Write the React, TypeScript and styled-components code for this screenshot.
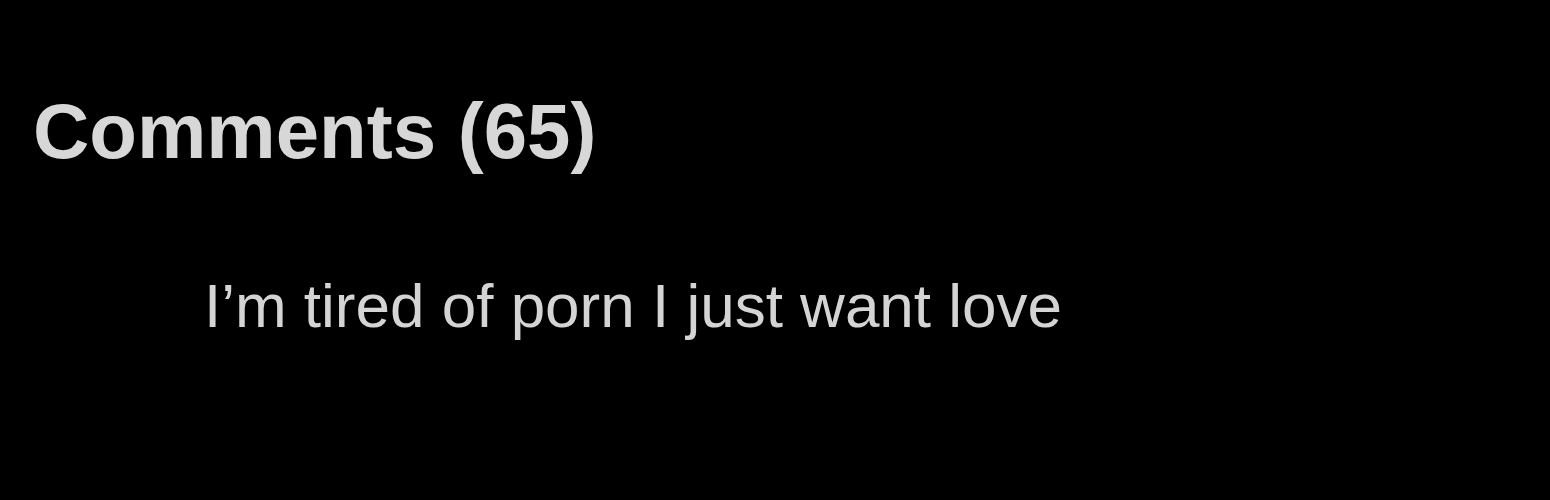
import styled, { createGlobalStyle } from 'styled-components';

const GlobalStyle = createGlobalStyle({
    'html, body': {
        margin: 0,
        padding: 0,
        background: '#000'
    },
    body: {
        fontFamily: '"Liberation Sans", Arial, sans-serif'
    }
});

const Page = styled.div({
    width: '1550px',
    height: '500px',
    boxSizing: 'border-box',
    background: '#000',
    padding: '92px 0 0 33px',
    display: 'flex',
    flexDirection: 'column',
    overflow: 'hidden'
});

const Heading = styled.h2({
    margin: 0,
    fontSize: '78px',
    lineHeight: 1,
    fontWeight: 700,
    color: '#d7d7d7'
});

const CommentList = styled.div({
    marginTop: '105px',
    paddingLeft: '171px',
    display: 'flex',
    flexDirection: 'column',
    gap: '24px'
});

const CommentText = styled.p({
    margin: 0,
    fontSize: '62px',
    lineHeight: 1,
    fontWeight: 400,
    color: '#d4d4d4'
});

const comments = ['I’m tired of porn I just want love'];

export default function App() {
    return (
        <>
            <GlobalStyle />
            <Page>
                <Heading>Comments (65)</Heading>
                <CommentList>
                    {comments.map((text) => (
                        <CommentText key={text}>{text}</CommentText>
                    ))}
                </CommentList>
            </Page>
        </>
    );
}
